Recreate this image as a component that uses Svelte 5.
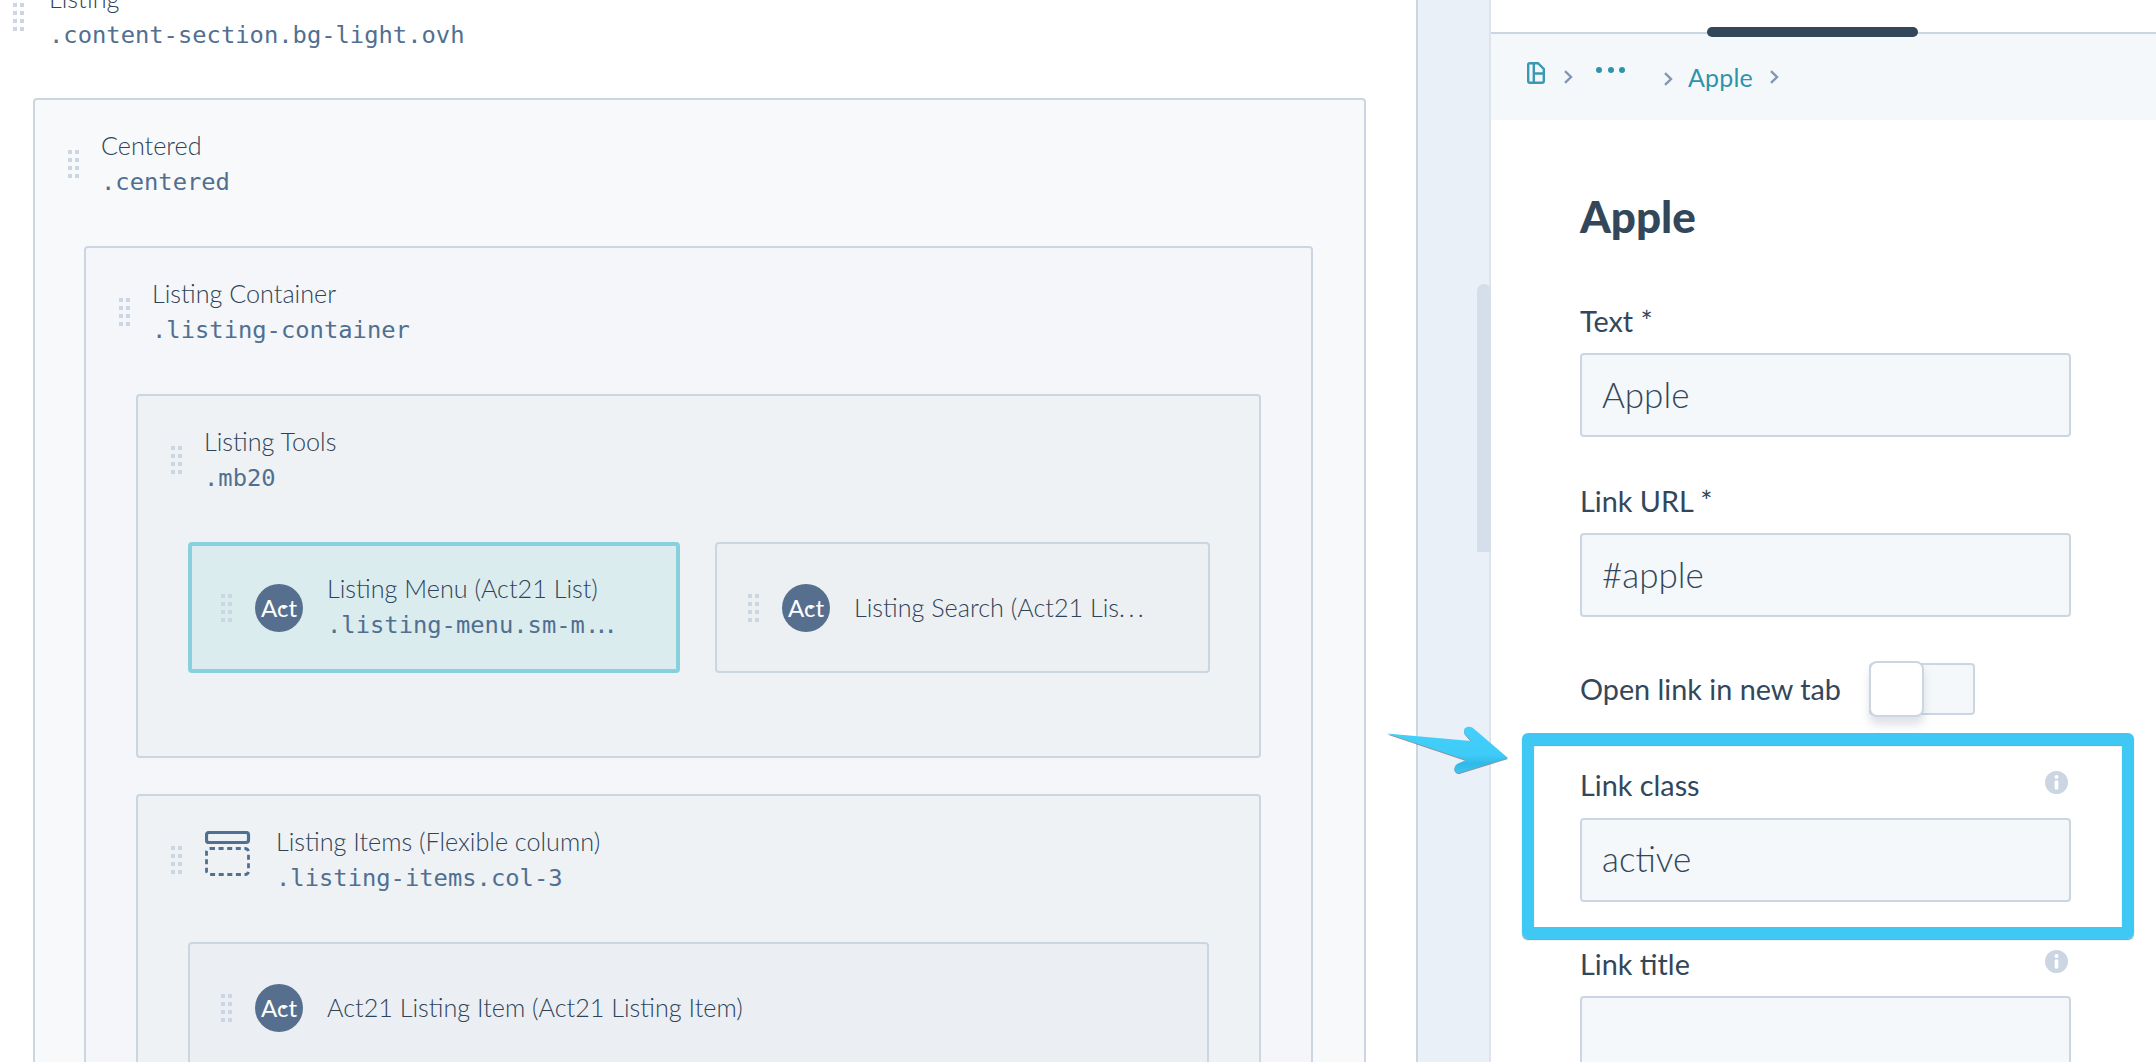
<script>
  const greys = 8;
</script>

{#snippet grip()}
  <span class="grip" aria-hidden="true">
    {#each Array(greys) as _}<i></i>{/each}
  </span>
{/snippet}

{#snippet avatar()}
  <span class="avatar"><span class="act">A<span class="c">c</span>t</span></span>
{/snippet}

{#snippet chevron(cls)}
  <svg class="chev {cls}" width="10" height="14" viewBox="0 0 10 14" fill="none" aria-hidden="true"><path d="M2 1.2 L8 7 L2 12.8" stroke="#8297b3" stroke-width="2.4"/></svg>
{/snippet}

{#snippet info()}
  <svg class="info" width="23" height="23" viewBox="0 0 23 23" aria-hidden="true"><circle cx="11.5" cy="11.5" r="11.5" fill="#cbd6e2"/><rect x="9.7" y="9.5" width="3.6" height="9" rx="1" fill="#fff"/><circle cx="11.5" cy="6" r="2" fill="#fff"/></svg>
{/snippet}

<div class="page">
  <main class="canvas">
    <div class="scroll">
      <header class="head top">
        {@render grip()}
        <div class="names">
          <div class="label">Listing</div>
          <div class="mono">.content-section.bg-light.ovh</div>
        </div>
      </header>

      <section class="box b1">
        <header class="head">
          {@render grip()}
          <div class="names">
            <div class="label">Centered</div>
            <div class="mono">.centered</div>
          </div>
        </header>

        <section class="box b2">
          <header class="head">
            {@render grip()}
            <div class="names">
              <div class="label">Listing Container</div>
              <div class="mono">.listing-container</div>
            </div>
          </header>

          <section class="box b3 tools">
            <header class="head">
              {@render grip()}
              <div class="names">
                <div class="label">Listing Tools</div>
                <div class="mono">.mb20</div>
              </div>
            </header>
            <div class="cards">
              <div class="card active">
                {@render grip()}
                {@render avatar()}
                <div class="names cardnames">
                  <div class="label">Listing Menu (Act21 List)</div>
                  <div class="mono">.listing-menu.sm-m<span class="ell">...</span></div>
                </div>
              </div>
              <div class="card">
                {@render grip()}
                {@render avatar()}
                <div class="names cardnames">
                  <div class="label">Listing Search (Act21 Lis<span class="dots-text">...</span></div>
                </div>
              </div>
            </div>
          </section>

          <section class="box b3 items">
            <header class="head">
              {@render grip()}
              <svg class="col-icon" width="46" height="46" viewBox="0 0 46 46" fill="none" aria-hidden="true">
                <rect x="1.5" y="1.5" width="42" height="10" rx="2.5" stroke="#516f90" stroke-width="3.2"/>
                <rect x="1.5" y="17.5" width="42" height="26" rx="3.5" stroke="#516f90" stroke-width="2.8" stroke-dasharray="5 3.6"/>
              </svg>
              <div class="names">
                <div class="label">Listing Items (Flexible column)</div>
                <div class="mono">.listing-items.col-3</div>
              </div>
            </header>
            <div class="card item">
              {@render grip()}
              {@render avatar()}
              <div class="names cardnames">
                <div class="label">Act21 Listing Item (Act21 Listing Item)</div>
              </div>
            </div>
          </section>
        </section>
      </section>
    </div>
  </main>

  <div class="track"><div class="thumb"></div></div>

  <aside class="panel">
    <div class="handle-row"><div class="handle"></div></div>
    <nav class="crumbs">
      <svg class="doc" width="18" height="22" viewBox="0 0 18 22" fill="none" aria-hidden="true">
        <path d="M2.5 1.2 H11 L16.8 7 V19 a1.8 1.8 0 0 1 -1.8 1.8 H3 a1.8 1.8 0 0 1 -1.8 -1.8 V2.5 a1.3 1.3 0 0 1 1.3 -1.3 Z" stroke="#3a98b4" stroke-width="2.4"/>
        <path d="M6.8 1.5 V20 M6.8 11.5 H16" stroke="#3a98b4" stroke-width="2.4"/>
      </svg>
      {@render chevron('c1')}
      <span class="dots"><i></i><i></i><i></i></span>
      {@render chevron('c2')}
      <span class="crumb">Apple</span>
      {@render chevron('c3')}
    </nav>
    <div class="form">
      <h1>Apple</h1>
      <div class="field f1">
        <div class="flabel">Text *</div>
        <div class="input">Apple</div>
      </div>
      <div class="field f2">
        <div class="flabel">Link URL *</div>
        <div class="input">#apple</div>
      </div>
      <div class="toggle-row">
        <span class="flabel">Open link in new tab</span>
        <span class="toggle"><span class="knob"></span></span>
      </div>
      <div class="field fclass">
        <div class="flabel between">Link class {@render info()}</div>
        <div class="input">active</div>
      </div>
      <div class="field ftitle">
        <div class="flabel between">Link title {@render info()}</div>
        <div class="input"></div>
      </div>
    </div>
  </aside>

  <div class="frame"></div>
  <svg class="arrow" width="126" height="52" viewBox="0 0 126 52" aria-hidden="true">
    <defs>
      <linearGradient id="ag" x1="0" y1="0" x2="0" y2="1">
        <stop offset="0" stop-color="#45d0fb"/>
        <stop offset="0.62" stop-color="#3ecbf7"/>
        <stop offset="0.8" stop-color="#2fb9e8"/>
        <stop offset="1" stop-color="#3ec5f2"/>
      </linearGradient>
    </defs>
    <path d="M1 7.5 L85 15 L79 8 Q76 3 81 1 Q84 0 87 2 L122 32 L75 46.5 Q71 48 69 45 Q67 41 71 38 L80 34 Z" fill="url(#ag)"/>
  </svg>
</div>

<style>
  :global(body) { margin: 0; background: #fff; }
  .page {
    position: relative;
    display: flex;
    width: 2156px;
    height: 1062px;
    overflow: hidden;
    font-family: Lato, "Noto Sans", sans-serif;
    color: #33475b;
  }
  .canvas { width: 1416px; flex: none; overflow: hidden; background: #fff; }
  .scroll { margin-top: -19px; padding: 0 51px 0 33px; }
  .track {
    flex: none;
    box-sizing: border-box;
    width: 75px;
    border-left: 2px solid #cbd6e2;
    border-right: 2px solid #dfe3eb;
    background: #eaf0f8;
    position: relative;
  }
  .thumb {
    position: absolute;
    right: -2px;
    top: 284px;
    width: 14px;
    height: 268px;
    border-radius: 7px 7px 0 0;
    background: #d5deeb;
  }
  .panel { flex: 1; min-width: 0; background: #fff; }

  .head { display: flex; align-items: center; height: 72px; padding: 28px 0 46px 33px; }
  .head.top { padding: 0; margin-left: -20px; height: 72px; margin-bottom: 45px; margin-top: 0; }
  .top .names { margin-left: 25px; }
  .names { margin-left: 22px; min-width: 0; }
  .label { font-size: 25.2px; line-height: 34px; color: #2f4358; white-space: nowrap; font-weight: 300; }
  .mono {
    font-family: "DejaVu Sans Mono", "Liberation Mono", monospace;
    font-size: 23.8px;
    line-height: 36px;
    margin-top: 2px;
    color: #516f90;
    white-space: nowrap;
  }
  .ell { letter-spacing: -5px; }
  .dots-text { letter-spacing: 3.5px; }
  .grip {
    display: grid;
    flex: none;
    grid-template-columns: 4px 4px;
    grid-auto-rows: 4px;
    column-gap: 3px;
    row-gap: 4px;
    width: 11px;
  }
  .grip i { background: #cbd6e2; display: block; }

  .box { box-sizing: border-box; border: 2px solid #cbd6e2; border-radius: 4px; }
  .b1 { background: #f8f9fb; padding: 0 51px 60px 49px; width: 1333px; }
  .b1 > .head { margin: 0 -49px; }
  .b2 { background: #f4f6f9; padding: 0 50px 60px; }
  .b2 > .head { margin: 0 -50px; }
  .b3 { background: #eef2f5; padding: 0 50px; }
  .b3 > .head { margin: 0 -50px; }
  .tools { height: 364px; margin-bottom: 36px; }
  .cards { display: grid; grid-template-columns: 492px 1fr; gap: 35px; margin-right: -1px; }
  .card {
    box-sizing: border-box;
    height: 131px;
    display: flex;
    align-items: center;
    padding-left: 31px;
    border: 2px solid #cbd6e2;
    border-radius: 4px;
    background: #edf0f3;
    min-width: 0;
  }
  .card.active { background: #dbecef; border: 4px solid #89d0dd; padding-left: 29px; }
  .cardnames { margin-left: 24px; padding-bottom: 1px; }
  .item { background: #ebeff3; }
  .avatar {
    flex: none;
    display: flex;
    align-items: center;
    justify-content: center;
    width: 48px;
    height: 48px;
    margin-left: 23px;
    border-radius: 50%;
    background: #566f8f;
  }
  .act { color: #fff; font-size: 24px; line-height: 1; font-weight: 400; }
  .c { position: relative; }
  .c::after {
    content: "";
    position: absolute;
    left: 5px;
    top: 12px;
    width: 4px;
    height: 4px;
    border-radius: 50%;
    background: #fff;
  }
  .col-icon { flex: none; margin-left: 23px; margin-top: -12px; margin-right: 3px; }
  .col-icon + .names { margin-left: 22px; }

  .handle-row { height: 34px; box-sizing: border-box; border-bottom: 2px solid #cbd6e2; position: relative; }
  .handle { position: absolute; left: 216px; top: 27px; width: 211px; height: 10px; border-radius: 5px; background: #33475b; }
  .crumbs {
    height: 86px;
    box-sizing: border-box;
    background: #f5f8fa;
    display: flex;
    align-items: center;
    padding-left: 36px;
    color: #2e94ac;
  }
  .doc { flex: none; margin-top: -8px; }
  .chev { flex: none; }
  .c1 { margin-left: 18px; margin-top: 0; }
  .dots { display: flex; gap: 5.5px; margin-left: 23px; margin-top: -14px; }
  .dots i { width: 6px; height: 6px; border-radius: 50%; background: #2e94ac; display: block; }
  .c2 { margin-left: 38px; margin-top: 4px; }
  .crumb { font-size: 25px; margin-left: 15px; letter-spacing: 0.2px; }
  .c3 { margin-left: 16px; }

  .form { padding: 0 85px 0 89px; }
  h1 { margin: 0; padding-top: 69px; font-size: 44px; line-height: 54px; font-weight: 900; color: #33475b; }
  .flabel { font-size: 28.8px; line-height: 36px; color: #33475b; }
  .field .flabel { height: 36px; }
  .between { display: flex; justify-content: space-between; align-items: flex-start; padding-right: 3px; }
  .info { margin-top: 4px; }
  .input {
    box-sizing: border-box;
    height: 84px;
    margin-top: 14px;
    padding: 0 20px;
    border: 2px solid #cbd6e2;
    border-radius: 4px;
    background: #f5f8fa;
    font-size: 35px;
    line-height: 78px;
    color: #33475b;
    font-weight: 300;
  }
  .f1 { margin-top: 60px; }
  .f2 { margin-top: 46px; }
  .toggle-row { display: flex; align-items: center; gap: 28px; margin-top: 44px; height: 56px; }
  .toggle {
    position: relative;
    display: block;
    box-sizing: border-box;
    width: 106px;
    height: 52px;
    border: 2px solid #cbd6e2;
    border-radius: 4px;
    background: #f5f8fa;
  }
  .knob {
    position: absolute;
    left: -2px;
    top: -4px;
    box-sizing: border-box;
    width: 55px;
    height: 56px;
    border: 2px solid #cbd6e2;
    border-radius: 8px;
    background: #fff;
    box-shadow: 0 8px 8px rgba(80, 100, 125, 0.18);
  }
  .fclass { margin-top: 50px; }
  .fclass .input { margin-top: 15px; line-height: 76px; }
  .ftitle { margin-top: 44px; }

  .frame {
    position: absolute;
    left: 1522px;
    top: 733px;
    width: 612px;
    height: 206px;
    box-sizing: border-box;
    border: 12px solid #3fc8f4;
    border-radius: 6px;
    box-shadow: 0 1px 1px rgba(40, 60, 70, 0.55), inset 0 1px 1px rgba(40, 60, 70, 0.55);
  }
  .arrow {
    position: absolute;
    left: 1386px;
    top: 726px;
    filter: drop-shadow(0 1px 0.5px rgba(40, 50, 60, 0.5));
  }
</style>
